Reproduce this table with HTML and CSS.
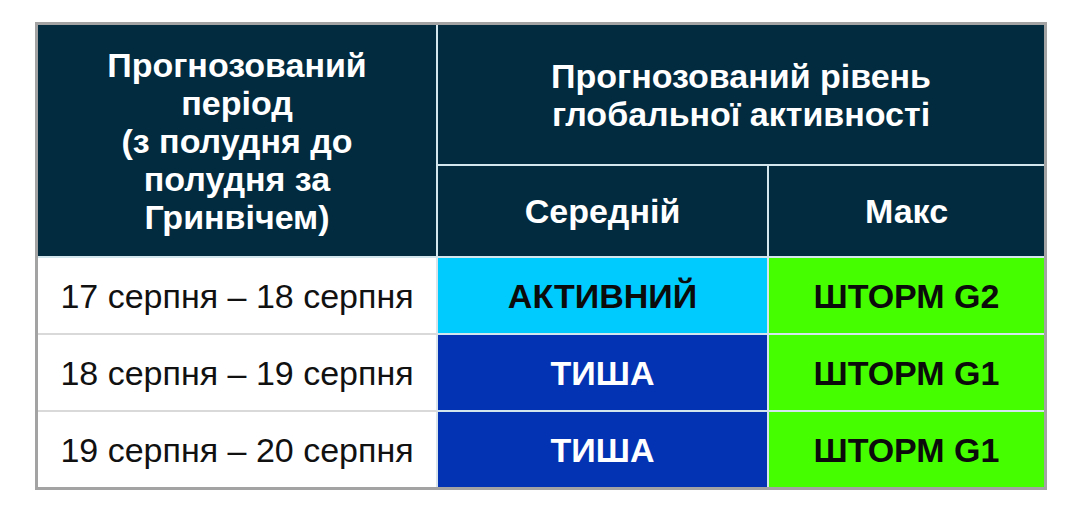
FILE: index.html
```html
<!DOCTYPE html>
<html lang="uk">
<head>
<meta charset="utf-8">
<link rel="stylesheet" href="styles.css">
</head>
<body>
<div class="wrap">
<table class="forecast">
  <colgroup>
    <col class="c1">
    <col class="c2">
    <col class="c3">
  </colgroup>
  <thead>
    <tr class="h1">
      <th rowspan="2">Прогнозований<br>період<br>(з полудня до<br>полудня за<br>Гринвічем)</th>
      <th colspan="2">Прогнозований рівень<br>глобальної активності</th>
    </tr>
    <tr class="h2">
      <th>Середній</th>
      <th>Макс</th>
    </tr>
  </thead>
  <tbody>
    <tr>
      <td class="date">17 серпня – 18 серпня</td>
      <td class="active">АКТИВНИЙ</td>
      <td class="storm">ШТОРМ G2</td>
    </tr>
    <tr>
      <td class="date">18 серпня – 19 серпня</td>
      <td class="quiet">ТИША</td>
      <td class="storm">ШТОРМ G1</td>
    </tr>
    <tr>
      <td class="date">19 серпня – 20 серпня</td>
      <td class="quiet">ТИША</td>
      <td class="storm">ШТОРМ G1</td>
    </tr>
  </tbody>
</table>
</div>
</body>
</html>
```

FILE: styles.css
```css
html, body {
  margin: 0;
  padding: 0;
  background: #ffffff;
}
.wrap {
  padding: 22px 0 0 35px;
}
.forecast {
  border-collapse: separate;
  border-spacing: 0;
  width: 1012px;
  border: 3px solid #a3a3a3;
  font-family: "Liberation Sans", Arial, sans-serif;
  font-size: 34px;
  table-layout: fixed;
  background: #d3e6ee;
}
.c1 { width: 400px; }
.c2 { width: 331px; }
.c3 { width: 275px; }
.forecast th, .forecast td {
  padding: 0;
  text-align: center;
  vertical-align: middle;
  white-space: nowrap;
}
.forecast th {
  background: #022b40;
  color: #ffffff;
  font-weight: bold;
  line-height: 38px;
}
.h1 th { height: 139px; }
.h1 th[rowspan] {
  border-right: 2px solid #d3e6ee;
  border-bottom: 2px solid #d3e6ee;
}
.h1 th[colspan] {
  border-bottom: 2px solid #d3e6ee;
}
.h2 th { height: 90px; border-bottom: 2px solid #d3e6ee; }
.h2 th:first-child { border-right: 2px solid #d3e6ee; }
.forecast td {
  height: 75px;
  line-height: 38px;
  border-right: 2px solid #d3e6ee;
  border-bottom: 2px solid #d3e6ee;
}
.forecast td:last-child { border-right: none; }
.forecast tbody tr:last-child td { border-bottom: none; }
.forecast td.date {
  background: #ffffff;
  color: #111111;
  border-bottom-color: #d9d9d9;
  border-right-color: #d9e4ea;
}
.forecast td.active {
  background: #00cbff;
  color: #0b0b0b;
  font-weight: bold;
}
.forecast td.quiet {
  background: #0333b3;
  color: #ffffff;
  font-weight: bold;
}
.forecast td.storm {
  background: #45ff00;
  color: #0b0b0b;
  font-weight: bold;
}
```
